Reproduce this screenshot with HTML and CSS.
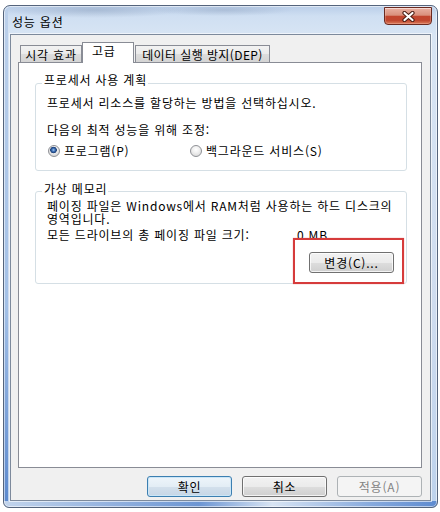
FILE: index.html
```html
<!DOCTYPE html>
<html lang="ko">
<head>
<meta charset="utf-8">
<title>성능 옵션</title>
<link rel="stylesheet" href="styles.css">
</head>
<body>
<div class="window">
  <div class="titlebar">
    <span class="title">성능 옵션</span>
    <button class="close" aria-label="닫기">
      <svg width="13" height="11" viewBox="0 0 13 11">
        <path d="M2.5 2 L10.5 9 M10.5 2 L2.5 9" stroke="#4a1d14" stroke-width="4.2" stroke-linecap="round"/>
        <path d="M2.5 2 L10.5 9 M10.5 2 L2.5 9" stroke="#ffffff" stroke-width="2.2" stroke-linecap="round"/>
      </svg>
    </button>
  </div>
  <div class="client">
    <div class="tabs">
      <div class="tab t1">시각 효과</div>
      <div class="tab sel t2">고급</div>
      <div class="tab t3">데이터 실행 방지(DEP)</div>
    </div>
    <div class="page">
      <div class="group g1">
        <div class="legend">프로세서 사용 계획</div>
        <div class="line l1">프로세서 리소스를 할당하는 방법을 선택하십시오.</div>
        <div class="line l2">다음의 최적 성능을 위해 조정:</div>
        <div class="radios">
          <label class="opt o1"><span class="radio on"></span>프로그램(P)</label>
          <label class="opt"><span class="radio"></span>백그라운드 서비스(S)</label>
        </div>
      </div>
      <div class="group g2">
        <div class="legend">가상 메모리</div>
        <div class="para">페이징 파일은 Windows에서 RAM처럼 사용하는 하드 디스크의<br>영역입니다.</div>
        <div class="size"><span class="size-label">모든 드라이브의 총 페이징 파일 크기:</span><span>0 MB</span></div>
        <div class="change-row"><button class="btn">변경(C)...</button></div>
        <div class="highlight"></div>
      </div>
    </div>
    <div class="actions">
      <button class="btn default">확인</button>
      <button class="btn">취소</button>
      <button class="btn" disabled>적용(A)</button>
    </div>
  </div>
</div>
</body>
</html>
```
FILE: styles.css
```css
* { box-sizing: border-box; }
html, body { margin: 0; padding: 0; background: #ffffff; }
body {
  font-family: "Noto Sans CJK KR", "Liberation Sans", sans-serif;
  font-size: 12px;
  line-height: 13px;
  letter-spacing: 0.8px;
  color: #000;
}
.window {
  margin: 5px 0 0 3px;
  width: 435px;
  height: 503px;
  border: 1px solid #55647c;
  border-radius: 7px 7px 6px 6px;
  background:
    linear-gradient(90deg, #c2d4ec, #6c95d3 45%, #d8e4f3 62%, #86a9dd 85%, #5e8bd0) bottom / 100% 6px no-repeat,
    linear-gradient(180deg, #bcd0ea 0, #a3c0e6 60%, #5b88cd 100%) left / 4px 100% no-repeat,
    radial-gradient(ellipse 90px 8px at 90px 4px, rgba(120,140,170,0.35), rgba(120,140,170,0)) no-repeat,
    radial-gradient(ellipse 70px 6px at 220px 4px, rgba(120,140,170,0.3), rgba(120,140,170,0)) no-repeat,
    linear-gradient(180deg, #b9cde8 0, #cfdff2 10px, #d8e5f4 30px, #cfdcef 60%, #bdd2ec 100%);
  box-shadow: inset 0 0 0 1px rgba(255,255,255,0.55);
  display: flex;
  flex-direction: column;
}
.titlebar {
  height: 28px;
  display: flex;
  align-items: flex-start;
  justify-content: space-between;
  padding: 0 5px 0 8px;
}
.title {
  padding-top: 9px;
}
.close {
  margin-top: 1px;
  width: 48px;
  height: 18px;
  padding: 0;
  border: 1px solid #6a2a20;
  border-radius: 0 0 4px 4px;
  background: linear-gradient(180deg, #e9b0a2 0%, #d9907c 45%, #c2452e 52%, #c0472f 78%, #dc7d5c 100%);
  box-shadow: inset 0 1px 0 rgba(255,255,255,0.45), inset 0 0 0 1px rgba(255,220,210,0.25);
  display: flex;
  align-items: center;
  justify-content: center;
}
.client {
  margin: 0 6px;
  height: 467px;
  border: 1px solid #7d8a9c;
  box-shadow: 0 0 0 1px rgba(255,255,255,0.6);
  background: #f0f0f0;
  padding: 7px 8px 0 7px;
  display: flex;
  flex-direction: column;
}
.tabs {
  height: 21px;
  display: flex;
  align-items: flex-end;
  padding-left: 2px;
  position: relative;
  z-index: 1;
}
.tab {
  height: 17px;
  margin-bottom: 1px;
  border: 1px solid #898c95;
  border-bottom: none;
  background: linear-gradient(180deg, #f2f2f2 0%, #ebebeb 50%, #dddddd 51%, #d4d4d4 100%);
  text-align: center;
  padding-top: 2px;
  white-space: nowrap;
}
.t1 { width: 62px; }
.t3 { width: 135px; margin-left: 1px; letter-spacing: 0.4px; }
.tab.sel {
  width: 52px;
  height: 21px;
  margin-bottom: 0;
  background: #ffffff;
  text-align: left;
  padding: 1px 0 0 9px;
}
.page {
  margin-top: -1px;
  height: 406px;
  border: 1px solid #898c95;
  background: #ffffff;
  padding: 20px 14px 0 16px;
  position: relative;
  z-index: 0;
}
.group {
  border: 1px solid #d5dfe5;
  border-radius: 3px;
  padding: 0 12px 0 11px;
}
.legend {
  width: fit-content;
  margin: -11px 0 0 -5px;
  padding: 0 1px 0 2px;
  background: #ffffff;
  line-height: 13px;
  white-space: nowrap;
}
.g1 { padding-bottom: 13px; }
.l1 { margin-top: 10px; }
.l2 { margin-top: 14px; }
.radios {
  margin-top: 8px;
  display: flex;
}
.opt {
  display: flex;
  align-items: center;
  white-space: nowrap;
}
.o1 { width: 142px; }
.radio {
  width: 12px;
  height: 12px;
  margin: 0 4px 0 1px;
  border-radius: 50%;
  border: 1px solid #8f9196;
  background: radial-gradient(circle at 50% 35%, #ffffff 0, #f0f0f0 40%, #d2d2d2 100%);
  flex: none;
}
.radio.on {
  background:
    radial-gradient(circle at 45% 40%, #a8c8ee 0, #3b6fb5 1.6px, #1d3e74 3px, rgba(30,60,110,0) 3.6px),
    radial-gradient(circle at 50% 35%, #ffffff 0, #f0f0f0 40%, #c8c8c8 100%);
}
.g2 {
  margin-top: 20px;
  padding-bottom: 10px;
  position: relative;
}
.g2 .legend { margin-top: -10px; }
.para {
  margin-top: 4px;
  white-space: nowrap;
}
.size {
  margin-top: 3px;
  display: flex;
  white-space: nowrap;
}
.size-label { width: 250px; }
.change-row {
  margin-top: 11px;
  display: flex;
  justify-content: flex-end;
}
.btn {
  width: 85px;
  height: 21px;
  padding: 0;
  font: inherit;
  letter-spacing: inherit;
  color: #000;
  border: 1px solid #707070;
  border-radius: 3px;
  background: linear-gradient(180deg, #f2f2f2 0%, #ebebeb 50%, #dddddd 51%, #cfcfcf 100%);
  box-shadow: inset 0 0 0 1px rgba(255,255,255,0.75);
}
.btn.default {
  border-color: #3c7fb1;
  background: linear-gradient(180deg, #eef5fa 0%, #e3edf5 50%, #d3e0ec 51%, #c6d6e6 100%);
  box-shadow: inset 0 0 0 1px #cbe6f7;
}
.btn:disabled {
  border-color: #adb2b5;
  background: #f4f4f4;
  color: #838383;
  box-shadow: none;
}
.highlight {
  position: absolute;
  left: 257px;
  top: 46px;
  width: 111px;
  height: 46px;
  border: 2px solid #d63b3b;
  box-shadow: 0 0 1px rgba(214,59,59,0.6);
}
.actions {
  margin-top: 8px;
  display: flex;
  justify-content: flex-end;
  gap: 10px;
}
```
